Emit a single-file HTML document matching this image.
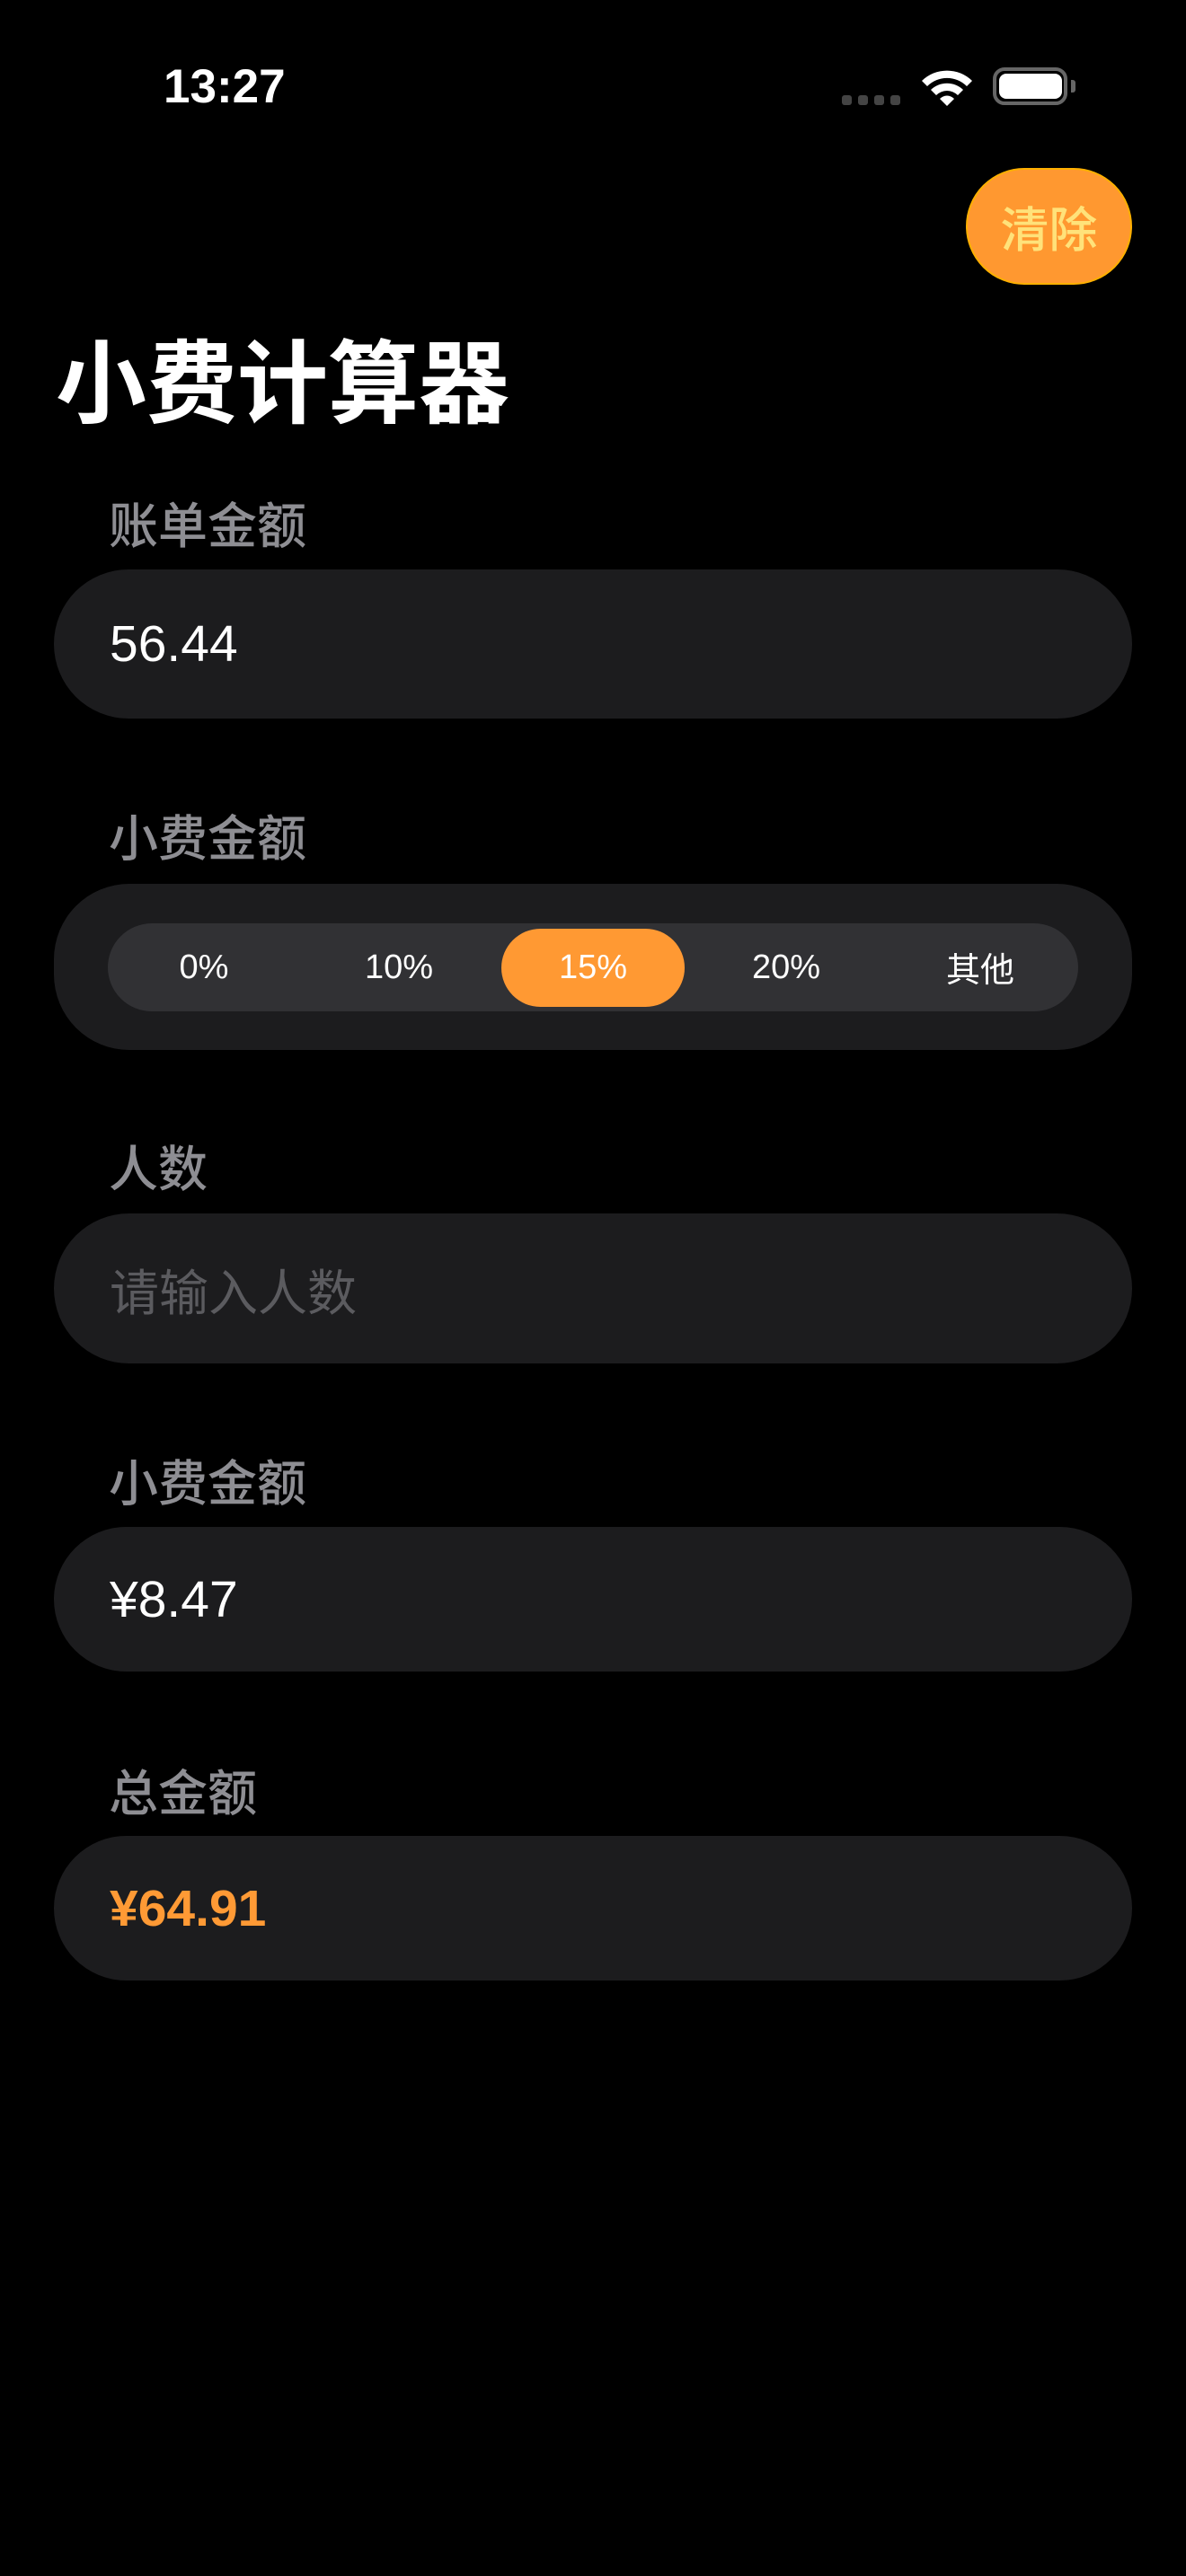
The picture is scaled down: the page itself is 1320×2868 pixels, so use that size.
<!DOCTYPE html>
<html><head><meta charset="utf-8"><style>
*{margin:0;padding:0;box-sizing:border-box}
body{width:1320px;height:2868px;background:#000;position:relative;overflow:hidden;font-family:"Liberation Sans","Noto Sans CJK SC",sans-serif}
.a{position:absolute}
.lbl{position:absolute;left:121px;height:80px;line-height:80px;font-size:55px;color:#8e8e93;font-family:"Noto Sans CJK SC",sans-serif;font-weight:500}
.fld{position:absolute;left:60px;width:1200px;background:#1c1c1e;border-radius:84px;display:flex;align-items:center;padding-left:62px;font-size:57px;color:#fff}
.seg{position:absolute;top:1028px;height:98px;line-height:98px;text-align:center;font-size:38px;color:#fff;width:200px}
</style></head><body>
<div class="a" style="left:182px;top:66px;font-size:53px;font-weight:bold;color:#fff;line-height:62px">13:27</div>
<div class="a" style="left:937px;top:106px;width:11px;height:11px;border-radius:3px;background:#444"></div>
<div class="a" style="left:955px;top:106px;width:11px;height:11px;border-radius:3px;background:#444"></div>
<div class="a" style="left:973px;top:106px;width:11px;height:11px;border-radius:3px;background:#444"></div>
<div class="a" style="left:991px;top:106px;width:11px;height:11px;border-radius:3px;background:#444"></div>
<svg class="a" style="left:1024px;top:74px" width="60" height="44" viewBox="0 0 60 44">
<path d="M2 16 A40 40 0 0 1 58 16 L52 22 A31 31 0 0 0 8 22 Z" fill="#fff"/>
<path d="M12 26 A26 26 0 0 1 48 26 L42 32 A17 17 0 0 0 18 32 Z" fill="#fff"/>
<path d="M22 36 A11 11 0 0 1 38 36 L30 44 Z" fill="#fff"/>
</svg>
<div class="a" style="left:1105px;top:75px;width:83px;height:42px;border:4px solid #666;border-radius:13px"></div>
<div class="a" style="left:1112px;top:82px;width:70px;height:28px;background:#fff;border-radius:8px"></div>
<div class="a" style="left:1192px;top:89px;width:5px;height:14px;background:#666;border-radius:0 3px 3px 0"></div>

<div class="a" style="left:1075px;top:187px;width:185px;height:130px;border-radius:65px;background:#ff9830;border:2px solid #ffb000;text-align:center;line-height:126px;font-size:54px;color:#ffe27a;font-family:'Noto Sans CJK SC',sans-serif;font-weight:500">清除</div>

<div class="a" style="left:62px;top:360px;font-size:101px;font-weight:bold;color:#fff;line-height:120px;font-family:'Noto Sans CJK SC',sans-serif">小费计算器</div>

<div class="lbl" style="top:541px">账单金额</div>
<div class="fld" style="top:634px;height:166px">56.44</div>

<div class="lbl" style="top:889px">小费金额</div>
<div class="a" style="left:60px;top:984px;width:1200px;height:185px;background:#1c1c1e;border-radius:84px"></div>
<div class="a" style="left:120px;top:1028px;width:1080px;height:98px;background:#313134;border-radius:49px"></div>
<div class="a" style="left:558px;top:1034px;width:204px;height:87px;background:#ff9933;border-radius:44px"></div>
<div class="seg" style="left:127px">0%</div>
<div class="seg" style="left:344px">10%</div>
<div class="seg" style="left:560px">15%</div>
<div class="seg" style="left:775px">20%</div>
<div class="seg" style="left:991px;font-family:'Noto Sans CJK SC',sans-serif">其他</div>

<div class="lbl" style="top:1257px">人数</div>
<div class="fld" style="top:1351px;height:167px;color:#5b5b5f;font-family:'Noto Sans CJK SC',sans-serif;font-size:55px">请输入人数</div>

<div class="lbl" style="top:1607px">小费金额</div>
<div class="fld" style="top:1700px;height:161px">¥8.47</div>

<div class="lbl" style="top:1952px">总金额</div>
<div class="fld" style="top:2044px;height:161px;color:#ff9a35;font-weight:bold">¥64.91</div>
</body></html>
